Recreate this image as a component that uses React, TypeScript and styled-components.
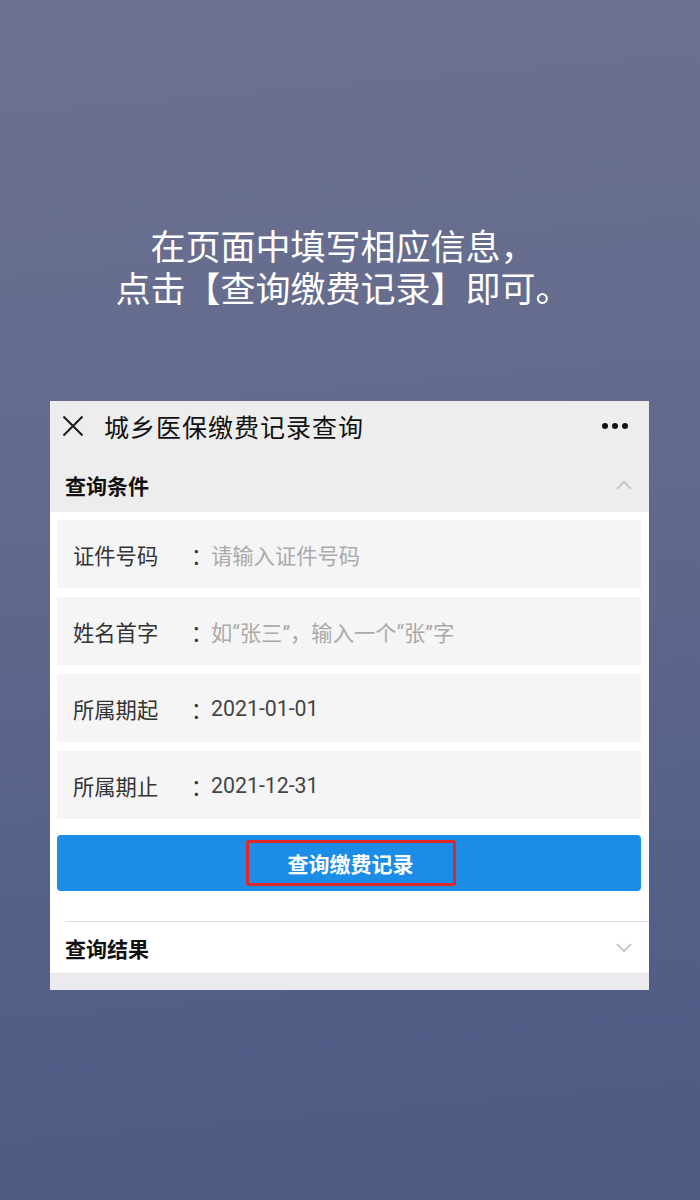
import React from "react";
import styled, { createGlobalStyle } from "styled-components";

const Global = createGlobalStyle`
  html, body { margin: 0; padding: 0; }
  body { font-family: "Noto Sans CJK SC", "Noto Sans", sans-serif; }
`;

const Page = styled.div`
  width: 700px;
  min-height: 1200px;
  background: linear-gradient(175deg, #6d7190 0%, #626a8c 40%, #56618a 70%, #4d5a82 100%);
  display: flex;
  flex-direction: column;
  align-items: center;
  box-sizing: border-box;
  padding-top: 224px;
`;

const Caption = styled.div`
  color: #ffffff;
  font-size: 35px;
  text-align: center;
  font-family: "Noto Sans CJK SC", sans-serif;
  margin: 0 14px 93px 0;
  display: flex;
  flex-direction: column;
`;

const CaptionLine = styled.div`
  height: 42px;
  line-height: 42px;
  white-space: nowrap;
`;

const Card = styled.div`
  width: 599px;
  margin-left: -1px;
  background: #ffffff;
  display: flex;
  flex-direction: column;
`;

const Gray = styled.div`
  background: #ededed;
`;

const TitleBar = styled.div`
  height: 50px;
  display: flex;
  align-items: center;
  padding: 0 20px 0 12px;
`;

const Title = styled.div`
  flex: 1;
  margin-left: 20px;
  font-size: 25px;
  color: #111;
  letter-spacing: 1px;
`;

const Dots = styled.div`
  display: flex;
  gap: 4px;
  margin-right: 1px;
`;

const Dot = styled.span`
  width: 6px;
  height: 6px;
  border-radius: 50%;
  background: #111;
`;

const SectionHeader = styled.div<{ $open?: boolean }>`
  height: ${(p) => (p.$open ? "61px" : "51px")};
  box-sizing: border-box;
  padding: ${(p) => (p.$open ? "6px 17px 0 15px" : "0 17px 0 15px")};
  display: flex;
  align-items: center;
  justify-content: space-between;
`;

const SectionTitle = styled.div`
  font-size: 21px;
  font-weight: 700;
  color: #111;
`;

const Body = styled.div`
  padding: 8px 8px 0 7px;
  display: flex;
  flex-direction: column;
  gap: 9px;
`;

const Row = styled.div`
  height: 68px;
  background: #f5f5f5;
  display: flex;
  align-items: center;
  padding-left: 16px;
  font-size: 21.3px;
`;

const Label = styled.span`
  width: 118px;
  color: #333;
`;

const Colon = styled.span`
  width: 20px;
  color: #333;
`;

const Value = styled.span<{ $placeholder?: boolean }>`
  color: ${(p) => (p.$placeholder ? "#aaaaaa" : "#444")};
  font-family: "Roboto", "Noto Sans CJK SC", sans-serif;
`;

const Button = styled.div`
  margin: 7px 0 0;
  height: 56px;
  background: #1b8de6;
  border-radius: 4px;
  display: flex;
  align-items: center;
  justify-content: center;
`;

const ButtonLabel = styled.div`
  width: 204px;
  height: 40px;
  border: 3px solid #e3262a;
  border-radius: 3px;
  display: flex;
  align-items: center;
  justify-content: center;
  color: #fff;
  font-size: 21px;
  font-weight: 700;
  margin-left: 3px;
`;

const Separator = styled.div`
  margin: 30px 0 0 15px;
  height: 1px;
  background: #dedede;
`;

const Footer = styled.div`
  height: 16px;
  background: #ebebef;
  border-top: 1px solid #e2e2e2;
`;

const Chevron = ({ up }: { up?: boolean }) => (
  <svg width="16" height="10" viewBox="0 0 16 10">
    <path
      d={up ? "M1 9 L8 2 L15 9" : "M1 1 L8 8 L15 1"}
      fill="none"
      stroke="#bdbdbd"
      strokeWidth="1.6"
    />
  </svg>
);

const CloseIcon = () => (
  <svg width="22" height="22" viewBox="0 0 22 22">
    <path d="M1.5 1.5 L20.5 20.5 M20.5 1.5 L1.5 20.5" stroke="#1a1a1a" strokeWidth="2" />
  </svg>
);

const rows: { label: string; value: string; placeholder?: boolean }[] = [
  { label: "证件号码", value: "请输入证件号码", placeholder: true },
  { label: "姓名首字", value: "如“张三”，输入一个“张”字", placeholder: true },
  { label: "所属期起", value: "2021-01-01" },
  { label: "所属期止", value: "2021-12-31" },
];

export default function App() {
  return (
    <>
      <Global />
      <Page>
        <Caption>
          <CaptionLine>在页面中填写相应信息，</CaptionLine>
          <CaptionLine>点击【查询缴费记录】即可。</CaptionLine>
        </Caption>
        <Card>
          <Gray>
            <TitleBar>
              <CloseIcon />
              <Title>城乡医保缴费记录查询</Title>
              <Dots>
                <Dot />
                <Dot />
                <Dot />
              </Dots>
            </TitleBar>
            <SectionHeader $open>
              <SectionTitle>查询条件</SectionTitle>
              <Chevron up />
            </SectionHeader>
          </Gray>
          <Body>
            {rows.map((r) => (
              <Row key={r.label}>
                <Label>{r.label}</Label>
                <Colon>：</Colon>
                <Value $placeholder={r.placeholder}>{r.value}</Value>
              </Row>
            ))}
            <Button>
              <ButtonLabel>查询缴费记录</ButtonLabel>
            </Button>
          </Body>
          <Separator />
          <SectionHeader>
            <SectionTitle>查询结果</SectionTitle>
            <Chevron />
          </SectionHeader>
          <Footer />
        </Card>
      </Page>
    </>
  );
}
